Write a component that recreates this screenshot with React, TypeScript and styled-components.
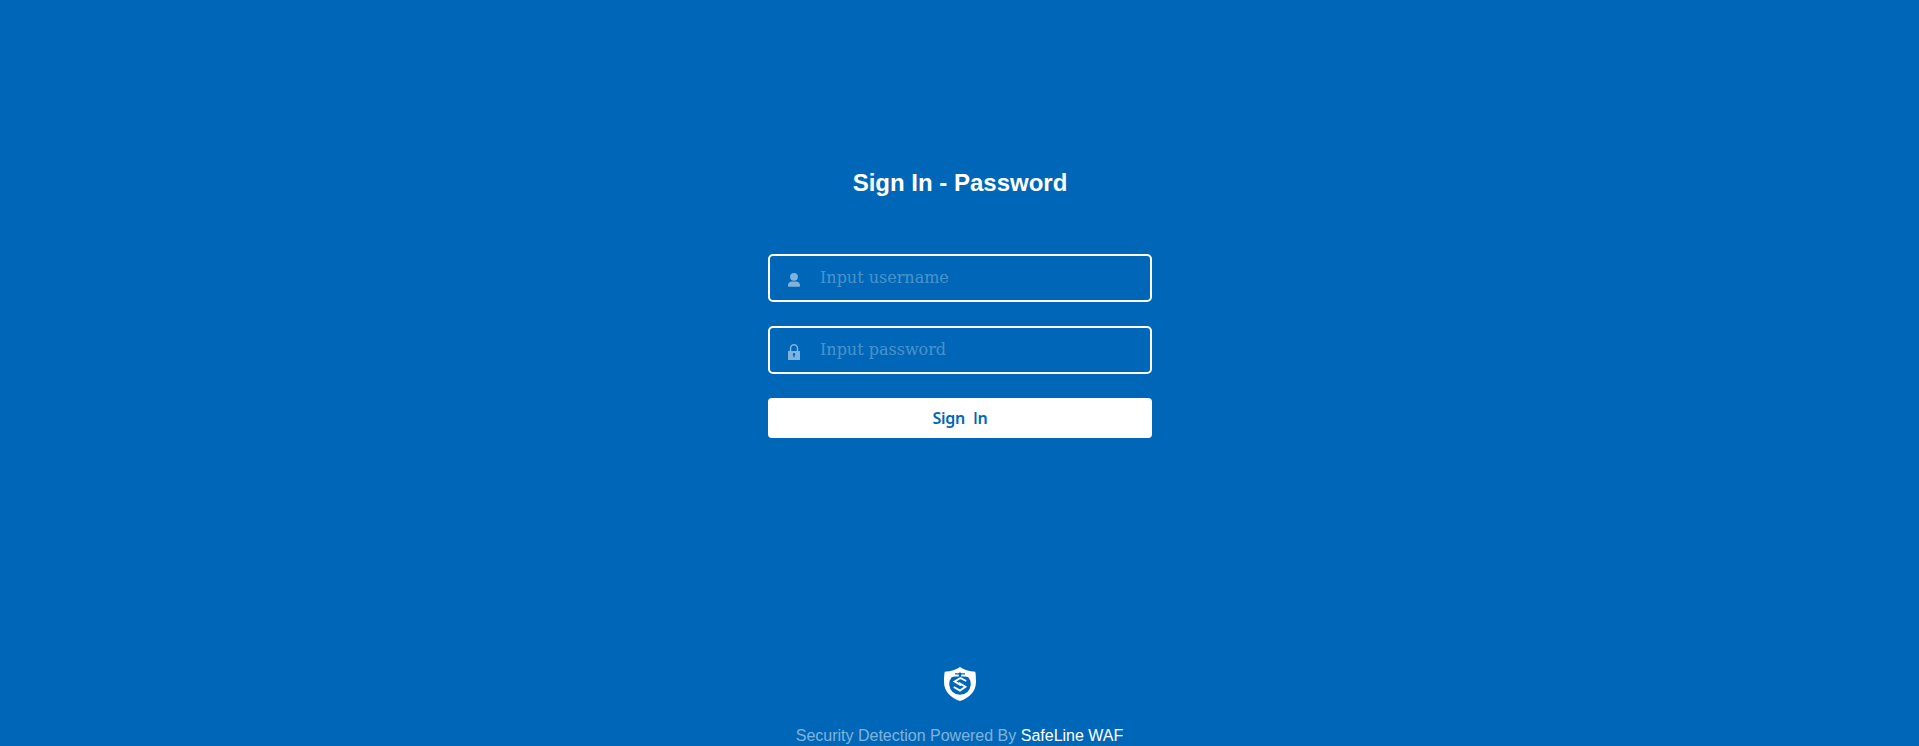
import React from "react";
import styled, { createGlobalStyle } from "styled-components";

const GlobalStyle = createGlobalStyle`
  html, body { margin: 0; height: 100%; background: #0067b8; overflow: hidden; }
  * { box-sizing: border-box; }
`;

const Page = styled.main`
  height: 746px;
  display: flex;
  flex-direction: column;
  align-items: center;
  overflow: hidden;
  background: #0067b8;
  color: #fff;
  font-family: "Liberation Sans", Arial, sans-serif;
`;

const Title = styled.h1`
  margin: 168px 0 0;
  padding-left: 1px;
  height: 86px;
  font-size: 24px;
  line-height: 29px;
  font-weight: 700;
  white-space: pre;
`;

const Form = styled.form`
  width: 384px;
  display: flex;
  flex-direction: column;
  gap: 24px;
`;

const Field = styled.label`
  height: 48px;
  display: flex;
  align-items: center;
  padding-left: 18px;
  border: 2px solid #fff;
  border-radius: 5px;
`;

const FieldIcon = styled.svg`
  width: 12px;
  height: 16px;
  margin: 4px 20.500px 0 0;
  flex: none;
  fill: rgba(255, 255, 255, 0.5);
`;

const Input = styled.input`
  flex: 1;
  min-width: 0;
  height: 40px;
  padding: 0 0 1px;
  border: 0;
  outline: 0;
  background: transparent;
  color: #fff;
  font: 16px "DejaVu Serif", serif;
  &::placeholder { color: rgba(255, 255, 255, 0.3); opacity: 1; }
`;

const Submit = styled.button`
  height: 40px;
  padding: 0 0 0 1px;
  border: 0;
  border-radius: 4px;
  background: #fff;
  color: #0067b8;
  font: 600 16px "Noto Sans", sans-serif;
  letter-spacing: -0.25px;
  white-space: pre;
`;

const PlainCapital = styled.span`
  font-family: "Open Sans", sans-serif;
`;

const Footer = styled.footer`
  margin-top: 229px;
  display: flex;
  flex-direction: column;
  align-items: center;
`;

const Logo = styled.svg`
  width: 32px;
  height: 34px;
`;

const Credit = styled.p`
  margin: 25px 0 0;
  font-size: 16px;
  line-height: 20px;
  white-space: nowrap;
  color: rgba(255, 255, 255, 0.5);
`;

const Brand = styled.span`
  color: #fff;
`;

export default function App() {
  return (
    <Page>
      <GlobalStyle />
      <Title>Sign In - Password</Title>
      <Form>
        <Field>
          <FieldIcon viewBox="0 0 12 16">
            <circle cx="6" cy="4.800" r="3.900" />
            <path d="M0 13.300C0 11.100 1.800 9.500 4 9.500h4c2.200 0 4 1.600 4 3.800 0 1-.5 1.500-1.300 1.500H1.300C.5 14.800 0 14.300 0 13.300z" />
          </FieldIcon>
          <Input placeholder="Input username" />
        </Field>
        <Field>
          <FieldIcon viewBox="0 0 12 16">
            <path
              fillRule="evenodd"
              d="M0 7h1.800V4.200a4.200 4.200 0 0 1 8.400 0V7H12v9H0zM3.300 7h5.400V4.200a2.700 2.700 0 0 0-5.400 0zM4.700 10.300a1.300 1.300 0 0 0 .7 1.200V13.300h1.200v-1.800a1.300 1.300 0 1 0-1.900-1.200z"
            />
          </FieldIcon>
          <Input type="password" placeholder="Input password" />
        </Field>
        <Submit type="button">
          {"Sign  "}
          <PlainCapital>I</PlainCapital>n
        </Submit>
      </Form>
      <Footer>
        <Logo viewBox="0 0 32 34">
          <path
            fill="#fff"
            d="M16 0C19.500 2.700 25 4.500 31.300 4.800c.5 3 .7 6.500.7 10.200C32 24.300 25.500 31 16 34 6.500 31 0 24.300 0 15 0 11.300.2 7.800.7 4.800 7 4.500 12.500 2.700 16 0z"
          />
          <path fill="#0067b8" d="M7.600 10.200 10.500 9.500h11l2.900.7A10.800 10.800 0 1 1 7.600 10.200z" />
          <path fill="#0067b8" d="M11 6.200h3.500L16 5.200l1.500 1H21v1.200h-3.800v2.700h-2.400V7.400H11z" />
          <path
            fill="none"
            stroke="#fff"
            strokeWidth="1.900"
            d="M22.200 14 16.400 11 10.600 14.400 17.200 18.500M14.800 15.800 21.400 19.800 16 23.600 9.800 20"
          />
        </Logo>
        <Credit>
          Security Detection Powered By <Brand>SafeLine WAF</Brand>
        </Credit>
      </Footer>
    </Page>
  );
}
